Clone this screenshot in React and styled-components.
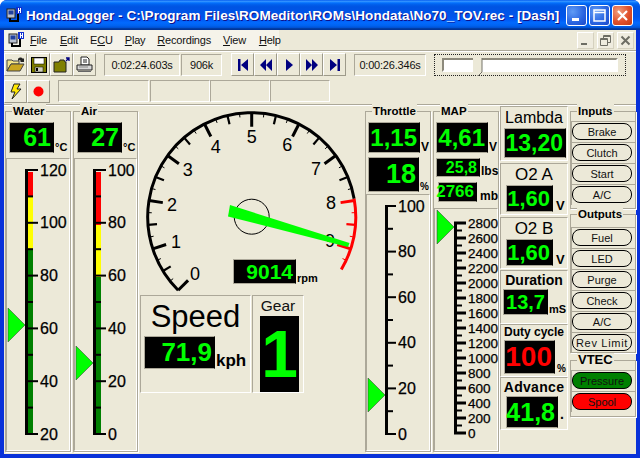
import styled, { createGlobalStyle } from 'styled-components'

const GlobalStyle = createGlobalStyle`
    html, body { margin: 0; padding: 0; background: #fff; }
    * { box-sizing: border-box; }
    body { font-family: "Liberation Sans", Arial, sans-serif; }
    svg { flex: none; }
`

const Window = styled.div`
    width: 640px;
    height: 458px;
    display: flex;
    flex-direction: column;
    overflow: hidden;
    background: #0831d9;
    border-radius: 7px 7px 0 0;
`
const TitleBar = styled.div`
    height: 30px;
    flex: none;
    display: flex;
    align-items: center;
    padding: 0 7px 0 6px;
    background: linear-gradient(180deg,#0058ee 0%,#3593ff 4%,#288eff 6%,#127dff 8%,#036ffc 10%,#0262ee 14%,#0057e5 20%,#0054e3 24%,#0055eb 56%,#005bf5 66%,#026afe 76%,#0062ef 86%,#0052d6 92%,#0040ab 94%,#003092 100%);
`
const TitleText = styled.div`
    flex: 1;
    margin-left: 4px;
    color: #fff;
    font-size: 13.5px;
    font-weight: bold;
    letter-spacing: .05px;
    white-space: nowrap;
    text-shadow: 1px 1px 0 #0f1089;
`
const CaptionButton = styled.div`
    width: 21px;
    height: 21px;
    margin-left: 2px;
    border: 1px solid #fff;
    border-radius: 3px;
    display: flex;
    align-items: center;
    justify-content: center;
    background: ${p => p.$close
        ? 'radial-gradient(circle at 30% 30%, #f0a080, #e0502c 55%, #c23a10)'
        : 'radial-gradient(circle at 30% 30%, #5f9bf5, #2a64e0 60%, #1c48c8)'};
`
const Client = styled.div`
    flex: 1;
    margin: 0 4px 4px;
    background: #ece9d8;
    display: flex;
    flex-direction: column;
    min-height: 0;
`
const MenuBar = styled.div`
    height: 20px;
    flex: none;
    display: flex;
    align-items: center;
    justify-content: space-between;
`
const MenuList = styled.div`
    width: 275px;
    height: 20px;
    display: flex;
    align-items: center;
    background: #f5f3ea;
    padding-left: 4px;
`
const MenuItem = styled.span`
    font-size: 11px;
    letter-spacing: -.2px;
    color: #111;
    margin-left: ${p => p.$gap}px;
    > u { text-underline-offset: 1px; }
`
const MdiButtons = styled.div`
    display: flex;
    gap: 3px;
    padding-right: 2px;
`
const MdiButton = styled.div`
    width: 17px;
    height: 17px;
    display: flex;
    align-items: center;
    justify-content: center;
    background: #efecdf;
    border: 1px solid;
    border-color: #fff #d5d1bf #d5d1bf #fff;
`
const ToolRow = styled.div`
    height: ${p => p.$h}px;
    flex: none;
    display: flex;
    align-items: center;
    border-top: ${p => p.$line ? '1px solid #aca899' : 'none'};
    box-shadow: ${p => p.$line ? 'inset 0 1px 0 #fff' : 'none'};
`
const ToolButton = styled.div`
    width: 23px;
    height: 23px;
    flex: none;
    display: flex;
    align-items: center;
    justify-content: center;
    border: 1px solid;
    border-color: #fff #9d9a8a #9d9a8a #fff;
    margin-left: ${p => p.$ml || 0}px;
`
const StatusBox = styled.div`
    width: ${p => p.$w}px;
    height: 22px;
    flex: none;
    display: flex;
    align-items: center;
    justify-content: center;
    margin-left: ${p => p.$ml || 0}px;
    font-size: 11px;
    letter-spacing: -.2px;
    color: #111;
    border: 1px solid;
    border-color: #aca899 #fff #fff #aca899;
`
const SliderFocus = styled.div`
    width: 192px;
    height: 22px;
    margin-left: 8px;
    padding: 3px 7px;
    border: 1px dotted #222;
`
const SliderTrack = styled.div`
    position: relative;
    height: 14px;
    background: #fff;
    border: 2px solid;
    border-color: #8d8a7c #fff #fff #8d8a7c;
`
const SliderThumb = styled.svg`
    position: absolute;
    left: 29px;
    top: -2px;
`
const Dash = styled.div`
    flex: 1;
    display: flex;
    align-items: flex-start;
    min-height: 0;
    padding-left: 1px;
    border-top: 1px solid #aca899;
    box-shadow: inset 0 1px 0 #fff;
`
const Group = styled.div`
    width: ${p => p.$w}px;
    height: ${p => p.$h}px;
    flex: none;
    display: flex;
    flex-direction: column;
    margin-top: ${p => p.$mt || 0}px;
    margin-left: ${p => p.$ml || 0}px;
    border: 1px solid #aca899;
    box-shadow: 1px 1px 0 #fff;
`
const GroupTitle = styled.div`
    align-self: flex-start;
    height: 14px;
    line-height: 14px;
    margin: -8px 0 0 6px;
    padding: 0 1px;
    background: #ece9d8;
    font-size: ${p => p.$size || 11.5}px;
    font-weight: bold;
    color: #000;
`
const ReadRow = styled.div`
    display: flex;
    align-items: flex-end;
    margin-top: ${p => p.$mt || 0}px;
    margin-left: ${p => p.$ml || 0}px;
`
const Readout = styled.div`
    width: ${p => p.$w}px;
    height: ${p => p.$h}px;
    flex: none;
    display: flex;
    align-items: center;
    justify-content: flex-end;
    padding-right: 2px;
    background: #000;
    border: 1px solid;
    border-color: #aca899 #000 #aca899 #aca899;
    color: ${p => p.$color || '#00ff00'};
    font-size: ${p => p.$size}px;
    font-weight: bold;
    white-space: nowrap;
`
const Unit = styled.span`
    margin-left: ${p => p.$ml || 1}px;
    margin-bottom: ${p => p.$lift || 0}px;
    font-size: ${p => p.$size || 11}px;
    font-weight: bold;
    line-height: 1;
    color: #000;
    white-space: nowrap;
`
const ScalePanel = styled.div`
    flex: 1;
    margin-top: ${p => p.$mt || 0}px;
    min-height: 0;
    border: 1px solid;
    border-color: #aca899 #fff #fff #aca899;
`
const ScaleSvg = styled.svg`
    display: block;
    overflow: visible;
    font-family: "Liberation Sans", Arial, sans-serif;
`
const GaugeColumn = styled.div`
    width: 222px;
    flex: none;
    margin-left: 2px;
`
const GaugeFace = styled.div`
    position: relative;
    height: 190px;
`
const RpmReadout = styled.div`
    position: absolute;
    left: 93px;
    top: 154px;
    display: flex;
    align-items: flex-end;
`
const LowerRow = styled.div`
    display: flex;
    height: 98px;
`
const SpeedPanel = styled.div`
    width: 111px;
    border: 1px solid;
    border-color: #aca899 #fff #fff #aca899;
`
const SpeedTitle = styled.div`
    text-align: center;
    height: 40px;
    line-height: 42px;
    font-size: 31px;
    color: #000;
`
const GearPanel = styled.div`
    width: 52px;
    margin-left: 1px;
    display: flex;
    flex-direction: column;
    border: 1px solid;
    border-color: #aca899 #fff #fff #aca899;
`
const GearTitle = styled.div`
    height: 20px;
    line-height: 19px;
    font-size: 15.5px;
    text-align: center;
    color: #111;
`
const GearValue = styled.div`
    width: 39px;
    height: 76px;
    margin-left: 7px;
    display: flex;
    align-items: center;
    justify-content: center;
    background: #000;
    color: #00ff00;
    font-size: 66px;
    font-weight: bold;
    line-height: 1;
`
const CellColumn = styled.div`
    width: 68px;
    flex: none;
    margin-left: 1px;
    margin-top: 1px;
    display: flex;
    flex-direction: column;
`
const Cell = styled.div`
    height: ${p => p.$h}px;
    flex: none;
    margin-bottom: ${p => p.$mb || 0}px;
    border: 1px solid;
    border-color: #aca899 #fff #fff #aca899;
`
const CellTitle = styled.div`
    height: ${p => p.$h}px;
    line-height: ${p => p.$h}px;
    text-align: center;
    font-size: ${p => p.$size}px;
    font-weight: ${p => p.$bold ? 'bold' : 'normal'};
    letter-spacing: ${p => p.$spacing || 0}px;
    color: #000;
    white-space: nowrap;
`
const SideColumn = styled.div`
    width: 66px;
    flex: none;
    margin-left: 2px;
    display: flex;
    flex-direction: column;
`
const LampList = styled.div`
    margin-top: ${p => p.$mt}px;
`
const LampCell = styled.div`
    height: 21px;
    padding-top: 1px;
    border-top: 1px solid #aca899;
    border-left: 1px solid #aca899;
`
const Lamp = styled.div`
    width: 60px;
    height: 17px;
    display: flex;
    align-items: center;
    justify-content: center;
    border: 1.3px solid #000;
    border-radius: 8px;
    background: ${p => p.$bg || 'transparent'};
    font-size: 11px;
    letter-spacing: ${p => p.$spaced ? '.7px' : '0'};
    color: #111;
    white-space: nowrap;
`

const NAV_BLUE = '#000080'

function AppIcon() {
    return <svg width="16" height="16" viewBox="0 0 16 16">
        <rect x="1" y="2" width="8" height="9" fill="#b8c0d0" stroke="#222" />
        <rect x="2.5" y="3.5" width="5" height="4" fill="#2040a0" />
        <rect x="10" y="0" width="6" height="7" fill="#1030d0" />
        <rect x="12" y="1" width="1" height="5" fill="#fff" />
        <rect x="14" y="1" width="1" height="5" fill="#fff" />
        <rect x="12" y="3" width="3" height="1" fill="#fff" />
        <path d="M4 11v3h8V7" fill="none" stroke="#000" strokeWidth="2" />
    </svg>
}

function OpenIcon() {
    return <svg width="19" height="17" viewBox="0 0 19 17">
        <path d="M1 4h5l1 1h6v3H5L1 15z" fill="#f5e58a" stroke="#444" />
        <path d="M1 15L5 8h13l-4 7z" fill="#c9a520" stroke="#444" />
        <path d="M12 3c1-2 4-2 5 0l1-1v4h-4l1-1c-1-1-2-1-3 0z" fill="#222" />
    </svg>
}

function SaveIcon() {
    return <svg width="16" height="16" viewBox="0 0 16 16">
        <rect x="0.5" y="0.5" width="15" height="15" fill="#7c7c00" stroke="#000" />
        <rect x="3" y="1" width="10" height="6" fill="#fff" stroke="#000" strokeWidth=".5" />
        <rect x="4" y="10" width="8" height="5" fill="#d0d0c0" stroke="#000" strokeWidth=".5" />
        <rect x="5" y="11" width="2" height="3" fill="#000" />
    </svg>
}

function FolderUpIcon() {
    return <svg width="18" height="16" viewBox="0 0 18 16">
        <path d="M1 5h5l1-2h4l1 2h1v10H1z" fill="#808000" stroke="#222" />
        <path d="M13 4l3-3M13 1h3v3" fill="none" stroke="#000080" strokeWidth="1.3" />
    </svg>
}

function PrintIcon() {
    return <svg width="17" height="17" viewBox="0 0 17 17">
        <path d="M5 1h6l2 2v6H5z" fill="#fff" stroke="#222" />
        <path d="M7 4h4M7 6h4" stroke="#222" />
        <path d="M1 9h15v5H1z" fill="#d8d8d8" stroke="#222" />
        <path d="M2 15h13v1H2z" fill="#666" />
        <path d="M3 11h9" stroke="#888" />
    </svg>
}

function NavIcon({ d }) {
    return <svg width="14" height="14" viewBox="0 0 14 14"><path d={d} fill={NAV_BLUE} /></svg>
}

function Gauge() {
    const cx = 111.7, cy = 111.7, r = 104
    const pt = (a, rad) => {
        const t = a * Math.PI / 180
        return [cx + rad * Math.sin(t), cy - rad * Math.cos(t)]
    }
    const arc = (a, b) => {
        const [x1, y1] = pt(a, r), [x2, y2] = pt(b, r)
        return `M${x1} ${y1}A${r} ${r} 0 ${b - a > 180 ? 1 : 0} 1 ${x2} ${y2}`
    }
    let ticks = []
    for (let i = 0; i < 38; i++) {
        const a = -135 + i * 6.75
        const len = i % 4 === 0 ? 14 : i % 2 === 0 ? 9 : 4
        const sw = i % 4 === 0 ? 3 : i % 2 === 0 ? 2.2 : 1
        const [x1, y1] = pt(a, r), [x2, y2] = pt(a, r - len)
        ticks.push(<line key={i} x1={x1} y1={y1} x2={x2} y2={y2} strokeWidth={sw} stroke={i >= 32 ? '#ff0000' : '#000'} />)
    }
    const digits = [[55, 169], [36, 137], [32, 100], [47.7, 65], [75.7, 41.7], [111.7, 32.3], [147.3, 40], [176, 64], [191, 98.3], [190, 136]]
    return <ScaleSvg width="222" height="190" viewBox="0 0 222 190">
        <path d={arc(-135, 80)} fill="none" stroke="#000" strokeWidth="3" />
        <path d={arc(80, 120.5)} fill="none" stroke="#ff0000" strokeWidth="3" />
        {ticks}
        {digits.map(([x, y], i) => <text key={i} x={x} y={y} textAnchor="middle" dominantBaseline="central" fontSize="18" fill="#000">{i}</text>)}
        <circle cx={cx} cy={cy} r="17.5" fill="none" stroke="#000" />
        <polygon points="90,100 209.5,138 208,142 88,111.5" fill="#00ff00" />
    </ScaleSvg>
}

function Scale({ width, height, barX, top, bottom, labels, labelX, labelSize = 16, heavy, segments, pointerY }) {
    const step = (bottom - top) / (labels.length - 1)
    let ticks = []
    for (let i = 0; i <= (labels.length - 1) * 2; i++) {
        const y = top + i * step / 2
        const major = i % 2 === 0
        ticks.push(<rect key={i} x={barX} y={y - (heavy && major ? 1.5 : 1)} width={major ? labelX - barX - 2 : 8} height={heavy && major ? 3 : 2} fill="#000" />)
    }
    return <ScaleSvg width={width} height={height}>
        <rect x={barX} y={top} width="3" height={bottom - top + 1} fill="#000" />
        {segments && segments.map(s => <rect key={s.color} x={barX + 3} y={s.from} width="5" height={s.to - s.from} fill={s.color} />)}
        {ticks}
        {labels.map((l, i) => <text key={l} x={labelX} y={top + i * step} dominantBaseline="central" fontSize={labelSize} fill="#000" stroke="#000" strokeWidth=".25">{l}</text>)}
        <polygon points={`${barX - 17},${pointerY - 17} ${barX},${pointerY} ${barX - 17},${pointerY + 17}`} fill="#00ff00" stroke="#333" strokeWidth=".5" />
    </ScaleSvg>
}

const mapLabels = [2800, 2600, 2400, 2200, 2000, 1800, 1600, 1400, 1200, 1000, 800, 600, 400, 200, 0]

export default function App() {
    return <Window>
        <GlobalStyle />
        <TitleBar>
            <AppIcon />
            <TitleText>HondaLogger - C:\Program Files\ROMeditor\ROMs\Hondata\No70_TOV.rec - [Dash]</TitleText>
            <CaptionButton>
                <svg width="13" height="13"><rect x="2" y="9" width="7" height="3" fill="#fff" /></svg>
            </CaptionButton>
            <CaptionButton>
                <svg width="13" height="13"><path d="M1 1h11v11H1zM1.5 3.5h10" fill="none" stroke="#fff" strokeWidth="1.5" /></svg>
            </CaptionButton>
            <CaptionButton $close>
                <svg width="13" height="13"><path d="M2 2l9 9M11 2l-9 9" stroke="#fff" strokeWidth="2.2" /></svg>
            </CaptionButton>
        </TitleBar>
        <Client>
            <MenuBar>
                <MenuList>
                    <AppIcon />
                    <MenuItem $gap={6}><u>F</u>ile</MenuItem>
                    <MenuItem $gap={13}><u>E</u>dit</MenuItem>
                    <MenuItem $gap={12}>E<u>C</u>U</MenuItem>
                    <MenuItem $gap={12}><u>P</u>lay</MenuItem>
                    <MenuItem $gap={12}><u>R</u>ecordings</MenuItem>
                    <MenuItem $gap={12}><u>V</u>iew</MenuItem>
                    <MenuItem $gap={13}><u>H</u>elp</MenuItem>
                </MenuList>
                <MdiButtons>
                    <MdiButton><svg width="11" height="11"><rect x="1" y="8" width="6" height="2" fill="#6d6d64" /></svg></MdiButton>
                    <MdiButton><svg width="11" height="11"><path d="M.5 3.5h7v7h-7zM3.5 3V.5h7v7H8" fill="none" stroke="#6d6d64" /><path d="M1 4.5h6M4 1.5h6" stroke="#6d6d64" /></svg></MdiButton>
                    <MdiButton><svg width="11" height="11"><path d="M1.5 1.5l8 8M9.5 1.5l-8 8" stroke="#6d6d64" strokeWidth="2" /></svg></MdiButton>
                </MdiButtons>
            </MenuBar>
            <ToolRow $h={28} $line>
                <ToolButton><OpenIcon /></ToolButton>
                <ToolButton><SaveIcon /></ToolButton>
                <ToolButton><FolderUpIcon /></ToolButton>
                <ToolButton><PrintIcon /></ToolButton>
                <StatusBox $w={76} $ml={8}>0:02:24.603s</StatusBox>
                <StatusBox $w={41} $ml={1}>906k</StatusBox>
                <ToolButton $ml={9}><NavIcon d="M2 1h2.5v12H2zM12 1v12L5 7z" /></ToolButton>
                <ToolButton><NavIcon d="M7 1v12L1 7zM13 1v12L7 7z" /></ToolButton>
                <ToolButton><NavIcon d="M4 1v12l7-6z" /></ToolButton>
                <ToolButton><NavIcon d="M1 1v12l6-6zM7 1v12l6-6z" /></ToolButton>
                <ToolButton><NavIcon d="M2 1v12l7-6zM9.5 1H12v12H9.5z" /></ToolButton>
                <StatusBox $w={72} $ml={8}>0:00:26.346s</StatusBox>
                <SliderFocus>
                    <SliderTrack>
                        <SliderThumb width="10" height="19" viewBox="0 0 10 19">
                            <path d="M0 0h9v14l-4 4-5-4z" fill="#ece9d8" />
                            <path d="M9 0v14l-4 4" fill="none" stroke="#77756a" />
                        </SliderThumb>
                    </SliderTrack>
                </SliderFocus>
            </ToolRow>
            <ToolRow $h={26}>
                <ToolButton>
                    <svg width="14" height="17" viewBox="0 0 14 17"><path d="M5 1h6L8 6h4L3 16l3-7H2z" fill="#ffe600" stroke="#222" /></svg>
                </ToolButton>
                <ToolButton>
                    <svg width="11" height="11"><circle cx="5.5" cy="5.5" r="5" fill="#ff0000" /></svg>
                </ToolButton>
                <StatusBox $w={91} $ml={8} />
                <StatusBox $w={60} $ml={1} />
                <StatusBox $w={60} />
                <StatusBox $w={60} />
            </ToolRow>
            <Dash>
                <Group $w={66} $h={341} $mt={6}>
                    <GroupTitle>Water</GroupTitle>
                    <ReadRow $mt={4} $ml={3}>
                        <Readout $w={45} $h={31} $size={25}>61</Readout><Unit>°C</Unit>
                    </ReadRow>
                    <ScalePanel $mt={5}>
                        <Scale width={62} height={290} barX={18} top={11} bottom={275} labelX={33}
                            labels={[120, 100, 80, 60, 40, 20]} pointerY={166}
                            segments={[{ from: 13, to: 38, color: '#ff0000' }, { from: 38, to: 91, color: '#ffff00' }, { from: 91, to: 274, color: '#008000' }]} />
                    </ScalePanel>
                </Group>
                <Group $w={65} $h={341} $mt={6} $ml={2}>
                    <GroupTitle>Air</GroupTitle>
                    <ReadRow $mt={4} $ml={3}>
                        <Readout $w={45} $h={31} $size={25}>27</Readout><Unit>°C</Unit>
                    </ReadRow>
                    <ScalePanel $mt={5}>
                        <Scale width={62} height={290} barX={18} top={11} bottom={275} labelX={33}
                            labels={[100, 80, 60, 40, 20, 0]} pointerY={204}
                            segments={[{ from: 13, to: 66, color: '#ff0000' }, { from: 66, to: 118, color: '#ffff00' }, { from: 118, to: 274, color: '#008000' }]} />
                    </ScalePanel>
                </Group>
                <GaugeColumn>
                    <GaugeFace>
                        <Gauge />
                        <RpmReadout>
                            <Readout $w={63} $h={25} $size={21}>9014</Readout><Unit $ml={0} $size={11}>rpm</Unit>
                        </RpmReadout>
                    </GaugeFace>
                    <LowerRow>
                        <SpeedPanel>
                            <SpeedTitle>Speed</SpeedTitle>
                            <ReadRow $ml={3}>
                                <Readout $w={71} $h={33} $size={26}>71,9</Readout><Unit $ml={1} $size={17}>kph</Unit>
                            </ReadRow>
                        </SpeedPanel>
                        <GearPanel>
                            <GearTitle>Gear</GearTitle>
                            <GearValue>1</GearValue>
                        </GearPanel>
                    </LowerRow>
                </GaugeColumn>
                <Group $w={66} $h={341} $mt={6} $ml={3}>
                    <GroupTitle>Throttle</GroupTitle>
                    <ReadRow $mt={4} $ml={2}>
                        <Readout $w={52} $h={31} $size={24}>1,15</Readout><Unit $size={12}>V</Unit>
                    </ReadRow>
                    <ReadRow $mt={4} $ml={2}>
                        <Readout $w={51} $h={35} $size={27}>18</Readout><Unit $size={10}>%</Unit>
                    </ReadRow>
                    <ScalePanel $mt={2}>
                        <Scale width={62} height={250} barX={18} top={11} bottom={239} labelX={31}
                            labels={[100, 80, 60, 40, 20, 0]} pointerY={200} />
                    </ScalePanel>
                </Group>
                <Group $w={66} $h={341} $mt={6} $ml={2}>
                    <GroupTitle>MAP</GroupTitle>
                    <ReadRow $mt={4} $ml={2}>
                        <Readout $w={52} $h={31} $size={24}>4,61</Readout><Unit $size={12}>V</Unit>
                    </ReadRow>
                    <ReadRow $mt={5} $ml={2}>
                        <Readout $w={44} $h={19} $size={16}>25,8</Readout><Unit $size={12}>lbs</Unit>
                    </ReadRow>
                    <ReadRow $mt={5} $ml={4}>
                        <Readout $w={39} $h={20} $size={17}>2766</Readout><Unit $ml={3} $size={12}>mb</Unit>
                    </ReadRow>
                    <ScalePanel $mt={6}>
                        <Scale width={62} height={235} barX={19} top={14} bottom={224} labelX={33} labelSize={13.5} heavy
                            labels={mapLabels} pointerY={18} />
                    </ScalePanel>
                </Group>
                <CellColumn>
                    <Cell $h={55} $mb={2}>
                        <CellTitle $h={21} $size={16}>Lambda</CellTitle>
                        <ReadRow $ml={3}><Readout $w={62} $h={30} $size={23}>13,20</Readout></ReadRow>
                    </Cell>
                    <Cell $h={52} $mb={2}>
                        <CellTitle $h={21} $size={17}>O2 A</CellTitle>
                        <ReadRow $ml={5}><Readout $w={47} $h={27} $size={22}>1,60</Readout><Unit $ml={3} $size={13}>V</Unit></ReadRow>
                    </Cell>
                    <Cell $h={52} $mb={1}>
                        <CellTitle $h={21} $size={17}>O2 B</CellTitle>
                        <ReadRow $ml={5}><Readout $w={47} $h={27} $size={22}>1,60</Readout><Unit $ml={3} $size={13}>V</Unit></ReadRow>
                    </Cell>
                    <Cell $h={54}>
                        <CellTitle $h={18} $size={14} $bold>Duration</CellTitle>
                        <ReadRow $ml={2}><Readout $w={45} $h={26} $size={20}>13,7</Readout><Unit $size={11}>mS</Unit></ReadRow>
                    </Cell>
                    <Cell $h={53}>
                        <CellTitle $h={15} $size={12} $bold>Duty cycle</CellTitle>
                        <ReadRow $ml={3}><Readout $w={51} $h={34} $size={28} $color="#ff0000">100</Readout><Unit $ml={2} $size={10}>%</Unit></ReadRow>
                    </Cell>
                    <Cell $h={53}>
                        <CellTitle $h={18} $size={14} $bold $spacing={.3}>Advance</CellTitle>
                        <ReadRow $ml={5}><Readout $w={52} $h={32} $size={25}>41,8</Readout><Unit $ml={2} $size={14} $lift={7}>.</Unit></ReadRow>
                    </Cell>
                </CellColumn>
                <SideColumn>
                    <Group $w={66} $h={98} $mt={6}>
                        <GroupTitle>Inputs</GroupTitle>
                        <LampList $mt={3}>
                            <LampCell><Lamp>Brake</Lamp></LampCell>
                            <LampCell><Lamp>Clutch</Lamp></LampCell>
                            <LampCell><Lamp>Start</Lamp></LampCell>
                            <LampCell><Lamp>A/C</Lamp></LampCell>
                        </LampList>
                    </Group>
                    <Group $w={66} $h={139} $mt={5}>
                        <GroupTitle>Outputs</GroupTitle>
                        <LampList $mt={6}>
                            <LampCell><Lamp>Fuel</Lamp></LampCell>
                            <LampCell><Lamp>LED</Lamp></LampCell>
                            <LampCell><Lamp>Purge</Lamp></LampCell>
                            <LampCell><Lamp>Check</Lamp></LampCell>
                            <LampCell><Lamp>A/C</Lamp></LampCell>
                            <LampCell><Lamp $spaced>Rev Limit</Lamp></LampCell>
                        </LampList>
                    </Group>
                    <Group $w={66} $h={57} $mt={7}>
                        <GroupTitle $size={13}>VTEC</GroupTitle>
                        <LampList $mt={3}>
                            <LampCell><Lamp $bg="#008000">Pressure</Lamp></LampCell>
                            <LampCell><Lamp $bg="#ff0000">Spool</Lamp></LampCell>
                        </LampList>
                    </Group>
                </SideColumn>
            </Dash>
        </Client>
    </Window>
}
